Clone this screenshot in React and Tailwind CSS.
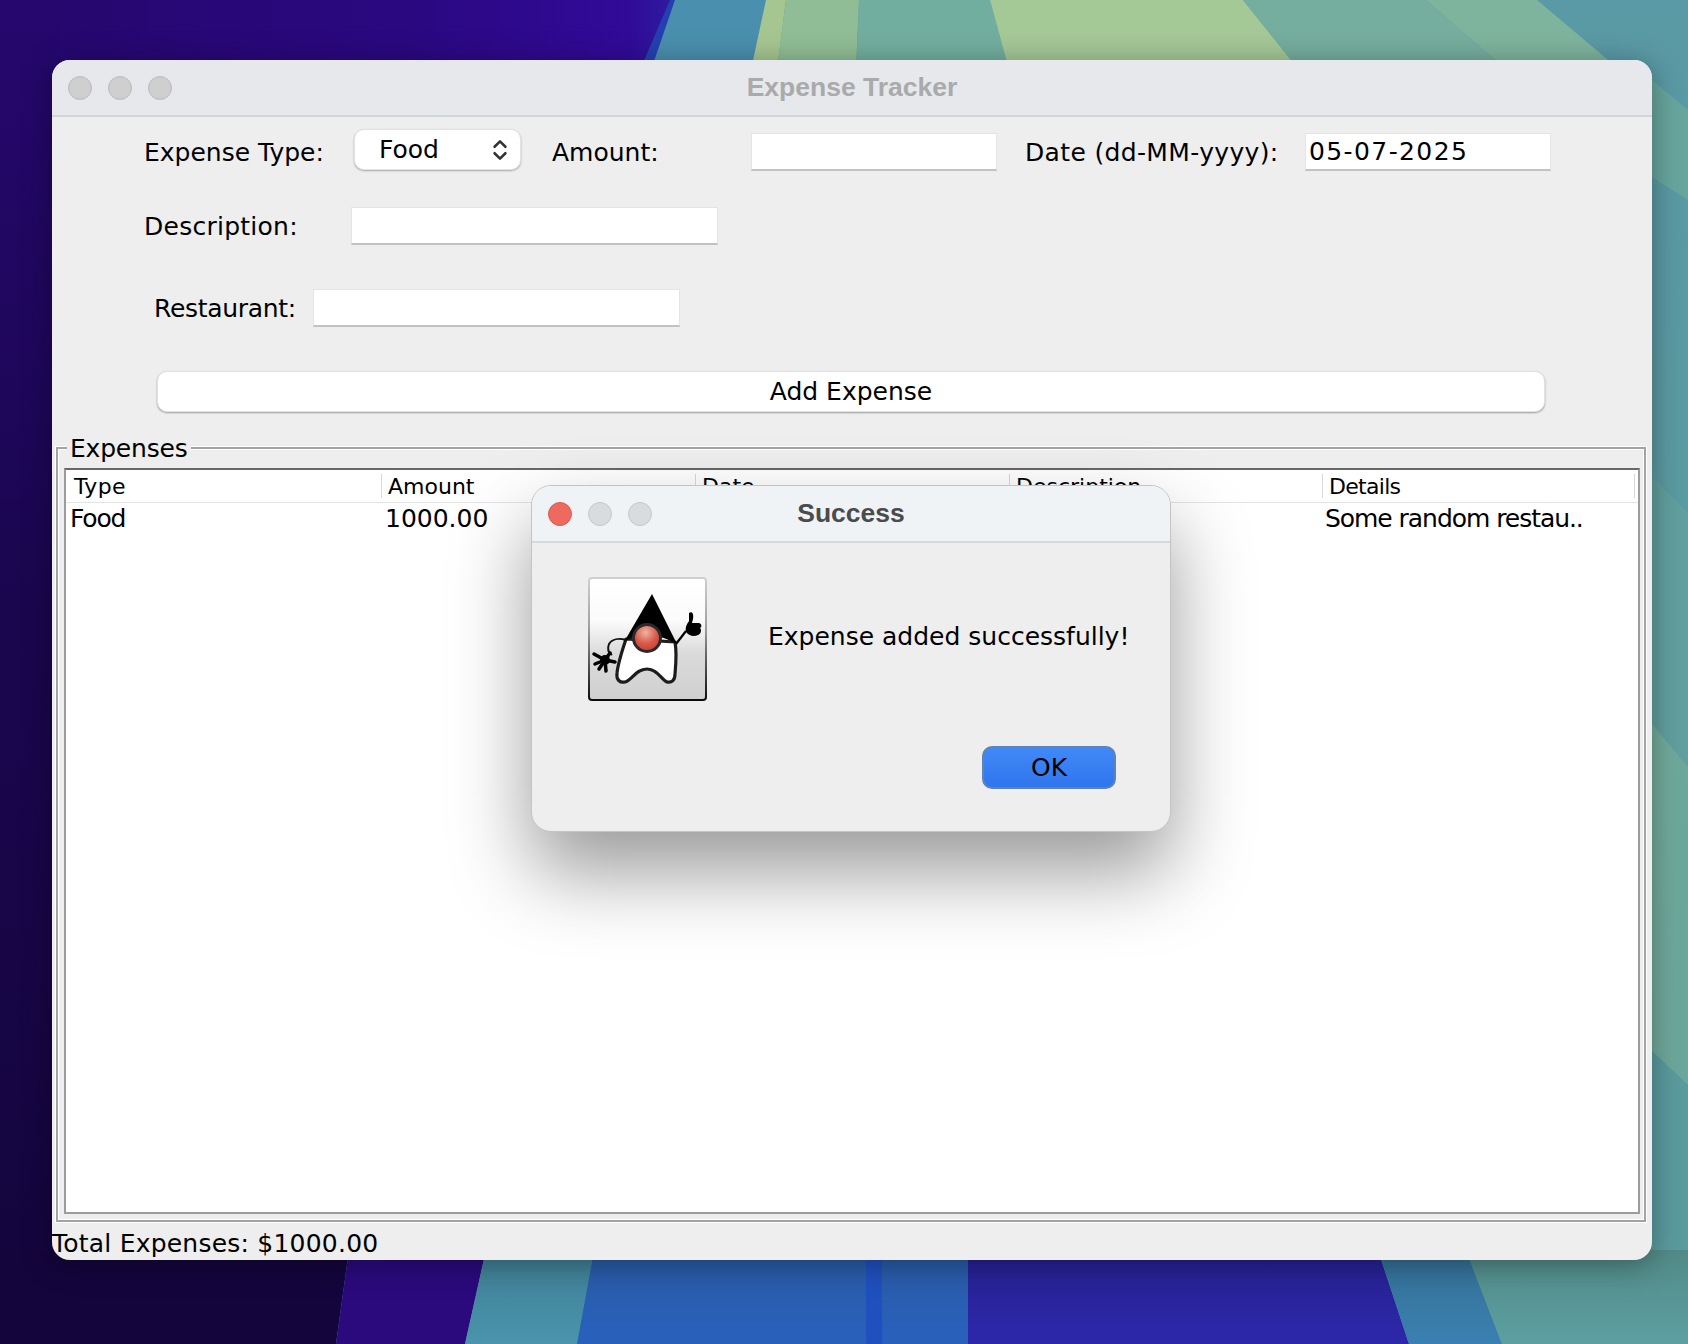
import { ChevronsUpDown } from "lucide-react"

const uiFont = "font-['DejaVu_Sans',sans-serif]"

const Wallpaper = () => (
  <svg className="absolute inset-0" width="1688" height="1344" viewBox="0 0 1688 1344">
    <defs>
      <linearGradient id="dark" x1="0" y1="0" x2="0" y2="1">
        <stop offset="0" stopColor="#26076e" />
        <stop offset="0.45" stopColor="#1a064f" />
        <stop offset="1" stopColor="#14053c" />
      </linearGradient>
      <linearGradient id="purpleTop" x1="0" y1="0" x2="1" y2="0">
        <stop offset="0" stopColor="#25076c" />
        <stop offset="0.6" stopColor="#2a0880" />
        <stop offset="0.93" stopColor="#310a98" />
        <stop offset="1" stopColor="#2d1ca0" />
      </linearGradient>
      <linearGradient id="teal" x1="0" y1="0" x2="0" y2="1">
        <stop offset="0" stopColor="#5a9aa6" />
        <stop offset="0.5" stopColor="#5b9ba0" />
        <stop offset="1" stopColor="#5b9c9e" />
      </linearGradient>
      <linearGradient id="band" x1="0" y1="0" x2="1" y2="0.3">
        <stop offset="0" stopColor="#76ae9a" />
        <stop offset="1" stopColor="#6ca79c" />
      </linearGradient>
      <linearGradient id="tealBottom" x1="0" y1="0" x2="0" y2="1">
        <stop offset="0" stopColor="#3f7d92" />
        <stop offset="1" stopColor="#4a94ad" />
      </linearGradient>
      <linearGradient id="blueBottom" x1="0" y1="0" x2="0" y2="1">
        <stop offset="0" stopColor="#2a5aa3" />
        <stop offset="1" stopColor="#2861bd" />
      </linearGradient>
      <linearGradient id="indigoBottom" x1="0" y1="0" x2="0" y2="1">
        <stop offset="0" stopColor="#262090" />
        <stop offset="1" stopColor="#2d28aa" />
      </linearGradient>
      <linearGradient id="skyBottom" x1="0" y1="0" x2="0" y2="1">
        <stop offset="0" stopColor="#346f93" />
        <stop offset="1" stopColor="#3b80b2" />
      </linearGradient>
      <linearGradient id="seaBottom" x1="0" y1="0" x2="0" y2="1">
        <stop offset="0" stopColor="#528a86" />
        <stop offset="1" stopColor="#5ca0a2" />
      </linearGradient>
    </defs>
    <rect width="1688" height="1344" fill="url(#teal)" />

    {/* top strip */}
    <polygon points="0,0 675,0 643,70 0,70" fill="url(#purpleTop)" />
    <polygon points="675,0 670,0 640,70 655,70" fill="#2440b0" />
    <polygon points="675,0 766,0 751,70 651,70" fill="#4a8fae" />
    <polygon points="766,0 786,0 777,70 751,70" fill="#a6c691" />
    <polygon points="786,0 859,0 856,70 777,70" fill="#90bd95" />
    <polygon points="859,0 990,0 1009,70 856,70" fill="#72ae9f" />
    <polygon points="990,0 1243,0 1299,70 1009,70" fill="#a5c897" />
    <polygon points="1243,0 1426,0 1507,70 1299,70" fill="#75ae9e" />
    <polygon points="1426,0 1537,0 1620,70 1507,70" fill="#7eb49d" />

    {/* left strip */}
    <rect x="0" y="0" width="60" height="1344" fill="url(#dark)" />

    {/* right strip bands */}
    <polygon points="1640,70 1688,110 1688,200 1640,170" fill="#68a69d" />
    <polygon points="1640,465 1688,513 1688,770 1640,710" fill="#629f9f" />
    <polygon points="1640,710 1688,767 1688,1085 1640,1040" fill="url(#band)" />
    <polygon points="1640,1040 1688,1085 1688,1344 1640,1344" fill="#5a9b9e" />

    {/* bottom strip */}
    <polygon points="0,1250 349,1250 336,1344 0,1344" fill="#14053c" />
    <polygon points="349,1250 486,1250 465,1344 336,1344" fill="#2a0a7c" />
    <polygon points="486,1250 594,1250 577,1344 465,1344" fill="url(#tealBottom)" />
    <polygon points="594,1250 866,1250 866,1344 577,1344" fill="url(#blueBottom)" />
    <rect x="866" y="1250" width="16" height="94" fill="#2050bd" />
    <rect x="882" y="1250" width="86" height="94" fill="url(#blueBottom)" />
    <polygon points="968,1250 1378,1250 1409,1344 968,1344" fill="url(#indigoBottom)" />
    <polygon points="1378,1250 1466,1250 1502,1344 1409,1344" fill="url(#skyBottom)" />
    <polygon points="1466,1250 1688,1250 1688,1344 1502,1344" fill="url(#seaBottom)" />
  </svg>
)

const Lights = ({ red, color }) => (
  <div className="flex items-center gap-[16px]">
    <span className={`w-[24px] h-[24px] rounded-full border ${red ? "bg-[#ee6a5f] border-[#dd5b50]" : color}`} />
    <span className={`w-[24px] h-[24px] rounded-full border ${color}`} />
    <span className={`w-[24px] h-[24px] rounded-full border ${color}`} />
  </div>
)

const TextField = ({ value, className }) => (
  <div
    className={`h-[38px] bg-white border border-[#e4e4e4] border-b-2 border-b-[#c2c2c2] pl-[3px] flex items-center text-[25px] tracking-[1.4px] text-black ${className}`}
  >
    {value}
  </div>
)

const DukeIcon = () => (
  <svg width="119" height="124" viewBox="0 0 119 124">
    <defs>
      <linearGradient id="dukeBg" x1="0" y1="0" x2="0" y2="1">
        <stop offset="0" stopColor="#ffffff" />
        <stop offset="0.35" stopColor="#fbfbfb" />
        <stop offset="0.62" stopColor="#dadada" />
        <stop offset="1" stopColor="#d0d0d0" />
      </linearGradient>
      <linearGradient id="dukeEdge" x1="0" y1="0" x2="0" y2="1">
        <stop offset="0" stopColor="#cfcfcf" />
        <stop offset="0.4" stopColor="#a0a0a0" />
        <stop offset="1" stopColor="#0c0c0c" />
      </linearGradient>
      <radialGradient id="dukeNose" cx="0.45" cy="0.3" r="0.75">
        <stop offset="0" stopColor="#eeb3a3" />
        <stop offset="0.55" stopColor="#d9584a" />
        <stop offset="1" stopColor="#c43a30" />
      </radialGradient>
    </defs>
    <rect x="1" y="1" width="117" height="122" rx="3" fill="url(#dukeBg)" stroke="url(#dukeEdge)" strokeWidth="2" />
    <path
      d="M38 62 C34 74 30 86 29 96 C28 103 32 106 37 105 C44 103 48 92 59 92 C69 92 73 102 79 105 C84 106 87 103 87 97 C88 86 89 76 87 65 Z"
      fill="#fff"
      stroke="#1c1c1c"
      strokeWidth="3.2"
      strokeLinejoin="round"
    />
    <path d="M64 17 L36 65 C40 62 44 60 48 60 L72 60 C77 61 83 64 89 67 Z" fill="#000" />
    <circle cx="59" cy="61" r="13.5" fill="url(#dukeNose)" stroke="#2a2a2a" strokeWidth="3" />
    <path d="M88 67 L98 54" stroke="#000" strokeWidth="2.2" fill="none" />
    <path
      d="M101 36 C104 34 106 37 105 42 L104 46 L111 46 C114 47 114 50 112 51 C114 53 113 57 110 58 C106 60 101 59 98 55 C97 50 99 47 101 44 Z"
      fill="#000"
    />
    <path d="M38 63 C31 61 24 62 21 67 C19 72 21 76 24 78" stroke="#111" strokeWidth="2" fill="none" />
    <g stroke="#000" strokeWidth="3.5" strokeLinecap="round">
      <path d="M17 83 L6 77" />
      <path d="M17 83 L7 87" />
      <path d="M17 83 L11 92" />
      <path d="M17 83 L18 94" />
      <path d="M17 83 L27 85" />
      <path d="M17 83 L22 76" />
    </g>
    <circle cx="17" cy="83" r="5" fill="#000" />
  </svg>
)

const Dialog = () => (
  <div className="absolute left-[479px] top-[425px] w-[640px] h-[347px] rounded-[20px] overflow-hidden bg-[#eeeeee] border border-[#c4c4c4] shadow-[0_40px_80px_rgba(0,0,0,0.4)]">
    <div className="relative h-[57px] bg-[#f0f3f6] border-b-2 border-[#d6d8da] flex items-center pl-[16px]">
      <Lights red color="bg-[#d9dcde] border-[#c4c8ca]" />
      <span className="absolute inset-x-0 text-center font-['Liberation_Sans',sans-serif] font-bold text-[26.5px] text-[#4a4b4d]">
        Success
      </span>
    </div>
    <div className="relative flex pl-[56px] pt-[34px]">
      <DukeIcon />
      <span className={`ml-[61px] mt-[42px] text-[25px] leading-[36px] text-black whitespace-nowrap ${uiFont}`}>
        Expense added successfully!
      </span>
    </div>
    <div className="flex justify-end pr-[54px] pt-[45px]">
      <button className="w-[134px] h-[43px] rounded-[10px] border-2 border-[#6083b4] bg-gradient-to-b from-[#4189f7] to-[#2f75ee] text-[25px] text-black flex items-center justify-center">
        OK
      </button>
    </div>
  </div>
)

const App = () => {
  return (
    <div className={`relative w-[1688px] h-[1344px] overflow-hidden ${uiFont}`}>
      <Wallpaper />
      <div className="relative pl-[52px] pt-[60px]">
        <div className="relative w-[1600px] h-[1200px] rounded-[18px] bg-[#eeeeee] shadow-[0_4px_30px_rgba(0,0,0,0.35)]">
          <div className="h-full rounded-[18px] overflow-hidden flex flex-col">
            {/* Title bar */}
            <div className="relative h-[57px] shrink-0 bg-[#e6e8eb] border-b-2 border-[#d4d5d7] flex items-center pl-[16px]">
              <Lights color="bg-[#cfcfd0] border-[#b9b9ba]" />
              <span className="absolute inset-x-0 text-center font-['Liberation_Sans',sans-serif] font-bold text-[26.5px] text-[#a9aaab]">
                Expense Tracker
              </span>
            </div>

            {/* Form */}
            <div className="flex items-start mt-[12px] pl-[92px] h-[41px] text-[25px] leading-[38px] text-black">
              <span className="w-[210px] pt-[5px]">Expense Type:</span>
              <div className="w-[167px] h-[41px] bg-white rounded-[10px] border border-[#e2e2e2] shadow-[0_1px_2px_rgba(0,0,0,0.3)] flex items-center justify-between pl-[24px] pr-[7px]">
                <span className="pt-[1px]">Food</span>
                <ChevronsUpDown className="w-[26px] h-[30px] text-[#333333]" strokeWidth={2.4} />
              </div>
              <span className="ml-[31px] w-[199px] pt-[5px]">Amount:</span>
              <TextField className="w-[246px] mt-[4px]" />
              <span className="ml-[28px] w-[280px] pt-[5px] tracking-[0.35px] whitespace-nowrap">Date (dd-MM-yyyy):</span>
              <TextField value="05-07-2025" className="w-[246px] mt-[4px]" />
            </div>

            <div className="flex items-center mt-[37px] pl-[92px] h-[38px] text-[25px] text-black">
              <span className="w-[207px] tracking-[0.25px] pt-[2px]">Description:</span>
              <TextField className="w-[367px]" />
            </div>

            <div className="flex items-center mt-[44px] pl-[102px] h-[38px] text-[25px] text-black">
              <span className="w-[159px] tracking-[-0.3px] pt-[2px]">Restaurant:</span>
              <TextField className="w-[367px]" />
            </div>

            <div className="mt-[44px] ml-[105px] w-[1388px] h-[41px] shrink-0 bg-white rounded-[10px] border border-[#e2e2e2] shadow-[0_1px_2px_rgba(0,0,0,0.35)] flex items-center justify-center text-[25px] text-black">
              Add Expense
            </div>

            {/* Expenses group */}
            <div className="relative mt-[35px] ml-[4px] w-[1590px] h-[775px] shrink-0 border-2 border-[#a3a3a3] shadow-[0_0_0_1px_#ffffff,inset_0_0_0_1px_#ffffff] pt-[19px] pb-[6px] pl-[6px] pr-[4px]">
              <span className="absolute left-[9px] -top-[14px] bg-[#eeeeee] px-[3px] text-[25px] tracking-[-0.2px] leading-[28px] text-black">
                Expenses
              </span>
              <div className="h-full bg-white border-2 border-[#9c9c9c] border-t-[#676767]">
                <div className="relative grid grid-cols-[315px_314px_314px_313px_314px] h-[33px] border-b border-[#e4e4e4] text-[22px] leading-[33px] text-black">
                  <span className="pl-[8px] tracking-[0.3px]">Type</span>
                  {["Amount", "Date", "Description"].map((name) => (
                    <span key={name} className="relative pl-[7px]">
                      <span className="absolute left-0 top-[4px] h-[24px] border-l border-[#d8d8d8]" />
                      {name}
                    </span>
                  ))}
                  <span className="relative pl-[7px] tracking-[-0.7px]">
                    <span className="absolute left-0 top-[4px] h-[24px] border-l border-[#d8d8d8]" />
                    <span className="absolute left-[312px] top-[4px] h-[24px] border-l border-[#d8d8d8]" />
                    Details
                  </span>
                </div>
                <div className="grid grid-cols-[315px_314px_314px_313px_314px] h-[32px] text-[25px] leading-[32px] text-black">
                  <span className="pl-[4px] tracking-[-1.2px]">Food</span>
                  <span className="pl-[4px]">1000.00</span>
                  <span />
                  <span />
                  <span className="pl-[3px] tracking-[-1.05px] whitespace-nowrap">Some random restau..</span>
                </div>
              </div>
            </div>

            <div className="mt-[4px] text-[25px] tracking-[0.22px] leading-[36px] text-black whitespace-nowrap">
              Total Expenses: $1000.00
            </div>
          </div>
          <Dialog />
        </div>
      </div>
    </div>
  )
}

export default App
